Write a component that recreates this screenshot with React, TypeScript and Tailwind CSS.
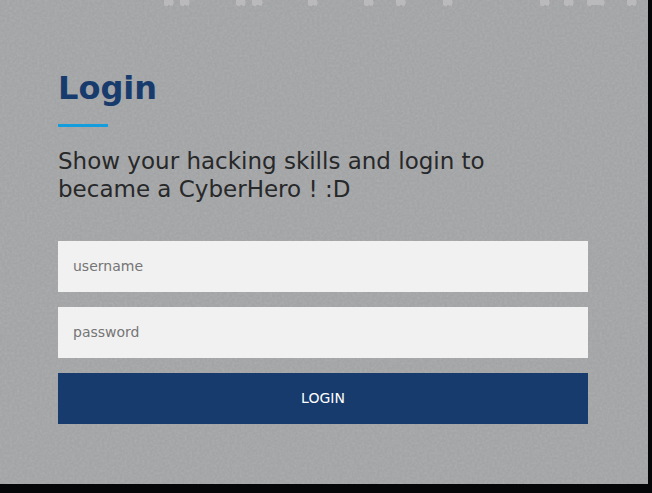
import React from "react";

const specks = [
  [164, 9], [180, 9], [236, 9], [252, 10], [308, 9], [364, 9], [396, 9],
  [443, 9], [540, 9], [564, 9], [587, 17], [627, 9],
];

function Backdrop() {
  return (
    <svg className="pointer-events-none absolute inset-0 h-full w-full" aria-hidden="true">
      <filter id="grain" x="0" y="0" width="100%" height="100%">
        <feTurbulence type="fractalNoise" baseFrequency="0.4" numOctaves="2" seed="4" />
        <feColorMatrix type="matrix" values="0 0 0 0 1  0 0 0 0 1  0 0 0 0 1  0.4 0 0 0 -0.12" />
      </filter>
      <rect width="100%" height="100%" filter="url(#grain)" opacity="0.4" />
      {specks.map(([x, w]) => (
        <g key={x} fill="#c0bfc2">
          <rect x={x} y="0" width={w} height="5" opacity="0.75" />
          <rect x={x + 1} y="5" width={3} height="1" opacity="0.7" />
          <rect x={x + w - 3} y="5" width={3} height="1" opacity="0.5" />
          <rect x={x + w} y="1" width="1" height="3" opacity="0.4" />
        </g>
      ))}
    </svg>
  );
}

const field =
  "block h-[51px] w-full bg-[#f1f1f1] px-[15px] pb-[2px] text-sm text-[#212529] placeholder:text-[#757575] outline-none";

export default function App() {
  return (
    <div className="min-h-screen bg-[#050608] pr-1 pb-[9px] font-['DejaVu_Sans',sans-serif]">
      <main className="relative bg-[#a3a4a6] pt-[68px] pr-[60px] pb-[60px] pl-[58px]">
        <Backdrop />
        <div className="relative">
          <h1 className="text-[32px] leading-10 font-bold text-[#173b6c]">Login</h1>
          <div className="mt-4 h-[3px] w-[50px] bg-[#149ddd]" />
          <p className="mt-5 max-w-[480px] text-[23px] leading-7 text-[#272829]">
            Show your hacking skills and login to became a CyberHero ! :D
          </p>
          <form className="mt-[38px] flex flex-col gap-[15px]" onSubmit={(e) => e.preventDefault()}>
            <input className={field} type="text" name="username" aria-label="username" placeholder="username" />
            <input className={field} type="password" name="password" aria-label="password" placeholder="password" />
            <button type="submit" className="h-[51px] w-full bg-[#173b6c] pb-[2px] text-sm text-white">
              LOGIN
            </button>
          </form>
        </div>
      </main>
    </div>
  );
}
